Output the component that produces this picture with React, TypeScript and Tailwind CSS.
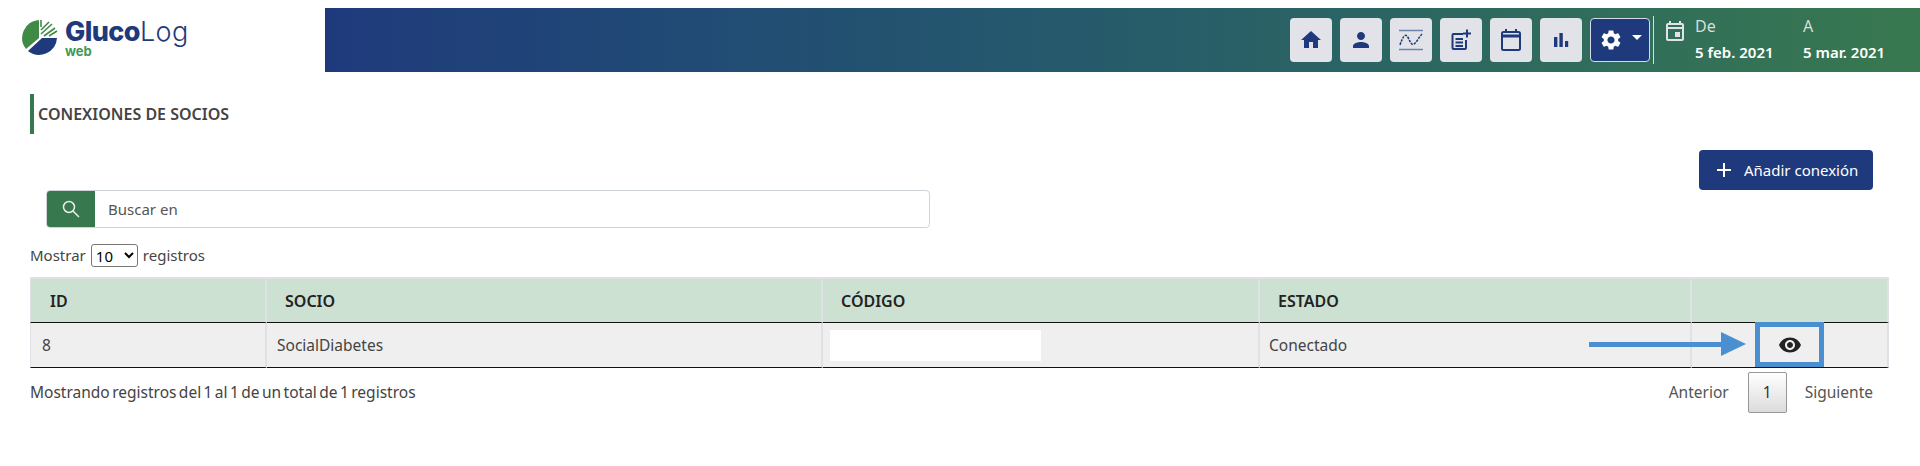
import React from "react";
import {
  MdAdd,
  MdHome,
  MdOutlineEvent,
  MdPerson,
  MdSettings,
  MdVisibility,
} from "react-icons/md";

function Logo() {
  return (
    <div className="flex h-[64px] w-[325px] items-start pl-[21px] pt-[8px]">
      <svg width="37" height="37" viewBox="0 0 37 37" className="mr-[7px] mt-[3px] shrink-0">
        <path d="M18 1 A18 18 0 0 0 5 30 L18 19 Z" fill="#3f8a45" />
        <path d="M7 32 A18 18 0 0 0 36 19 L21 19 Z" fill="#1f3a7c" />
        <g stroke="#3f8a45" strokeWidth="1.6">
          <path d="M20 1 L20 8" />
          <path d="M20 11 L28 3" />
          <path d="M20 15 L31 5" />
          <path d="M23 17 L34 9" />
          <path d="M28 17 L36 12" />
        </g>
      </svg>
      <div className="flex flex-col font-['Inter',sans-serif]">
        <div className="flex h-[30px] items-center text-[27px] leading-none tracking-[-0.6px] text-[#1f3a7c]">
          <span className="font-extrabold">Gluco</span>
          <span className="font-light tracking-[0.4px]">Log</span>
        </div>
        <div className="text-[13px] font-bold leading-[11px] text-[#3f9a55]">web</div>
      </div>
    </div>
  );
}

function IconButton({ children }: { children: React.ReactNode }) {
  return (
    <button className="flex h-[44px] w-[42px] items-center justify-center rounded-[4px] bg-[#e2e3e8] text-[#1f3a7c]">
      {children}
    </button>
  );
}

function Banner() {
  return (
    <div className="flex h-[64px] flex-1 items-center justify-end bg-gradient-to-r from-[#1f3a7c] to-[#38784f] pr-[34px]">
      <div className="flex items-center gap-[8px]">
        <IconButton>
          <MdHome size={24} />
        </IconButton>
        <IconButton>
          <MdPerson size={24} />
        </IconButton>
        <IconButton>
          <svg width="26" height="24" viewBox="0 0 26 24" fill="none" stroke="#1f3a7c">
            <path d="M1 2.5H25M1 21.5H25" stroke="#6f83b0" strokeWidth="1.5" />
            <path d="M2 17 C5 8 7 6 9 8 C12 12 13 18 16 16 C19 14 21 9 24 6" strokeWidth="1.5" strokeDasharray="2.5 1" />
          </svg>
        </IconButton>
        <IconButton>
          <svg width="22" height="22" viewBox="0 0 22 22" fill="none" stroke="#1f3a7c" strokeWidth="2">
            <path d="M13 5H3.5a1 1 0 0 0-1 1v13a1 1 0 0 0 1 1H15a1 1 0 0 0 1-1v-8" />
            <path d="M5.5 10H13M5.5 13.5H13M5.5 17H13" />
            <path d="M17 0.5V8.5M13 4.5H21" />
          </svg>
        </IconButton>
        <IconButton>
          <svg width="22" height="24" viewBox="0 0 22 24" fill="none" stroke="#1f3a7c" strokeWidth="2">
            <rect x="2" y="4" width="18" height="18" rx="1.5" />
            <path d="M2 8H20" strokeWidth="3" />
            <path d="M6 1V5M16 1V5" />
          </svg>
        </IconButton>
        <IconButton>
          <svg width="16" height="16" viewBox="0 0 16 16" fill="#1f3a7c">
            <rect x="1" y="5" width="3.4" height="10" />
            <rect x="6.4" y="1" width="3.4" height="14" />
            <rect x="12" y="9" width="3.2" height="6" />
          </svg>
        </IconButton>
        <button className="flex h-[44px] w-[60px] items-center justify-center gap-[9px] rounded-[4px] border border-[#d5dbe8] bg-[#1f3a7c] text-white">
          <MdSettings size={24} />
          <span className="mb-[6px] h-0 w-0 border-x-[5px] border-t-[5px] border-x-transparent border-t-white" />
        </button>
      </div>
      <div className="ml-[3px] h-[48px] w-px bg-[#d5dfdc]" />
      <MdOutlineEvent size={24} className="mb-[19px] ml-[9px] text-[#e2e3e8]" />
      <div className="ml-[8px] w-[108px] text-[15px]">
        <div className="mt-[-2px] text-[16px] leading-[24px] text-[#d8dfdc]">De</div>
        <div className="mt-[2px] font-semibold leading-[24px] text-white">5 feb. 2021</div>
      </div>
      <div className="w-[83px] text-[15px]">
        <div className="mt-[-2px] text-[16px] leading-[24px] text-[#d8dfdc]">A</div>
        <div className="mt-[2px] font-semibold leading-[24px] text-white">5 mar. 2021</div>
      </div>
    </div>
  );
}

function ConnectionsTable() {
  const th = "h-[46px] border-r-2 border-t-2 border-b border-r-[#dee2e6] border-t-[#dee2e6] border-b-[#111] text-left text-[16px] font-semibold text-[#222]";
  const td = "h-[45px] border-r-2 border-b border-r-[#dee2e6] border-b-[#111] text-[15.5px] text-[#444]";
  return (
    <div className="relative mt-[10px] w-[1859px]">
      <table className="w-full table-fixed border-separate border-spacing-0">
        <colgroup>
          <col className="w-[237px]" />
          <col className="w-[556px]" />
          <col className="w-[437px]" />
          <col className="w-[432px]" />
          <col className="w-[197px]" />
        </colgroup>
        <thead className="bg-[#cce1d2]">
          <tr>
            <th className={`${th} border-l pl-[19px] border-l-[#dee2e6]`}>ID</th>
            <th className={`${th} pl-[18px]`}>SOCIO</th>
            <th className={`${th} pl-[18px]`}>CÓDIGO</th>
            <th className={`${th} pl-[18px]`}>ESTADO</th>
            <th className={th} />
          </tr>
        </thead>
        <tbody className="bg-[#efefef]">
          <tr>
            <td className={`${td} border-l pl-[11px] pt-[2px] border-l-[#dee2e6]`}>8</td>
            <td className={`${td} pl-[10px] pt-[2px]`}>SocialDiabetes</td>
            <td className={`${td} pl-[7px]`}>
              <div className="h-[31px] w-[211px] bg-white" />
            </td>
            <td className={`${td} pl-[9px] pt-[2px]`}>Conectado</td>
            <td className={td}>
              <div className="ml-[63px] mt-[-1px] flex h-[45px] w-[69px] items-center justify-center border-[5px] border-[#4a90d0] text-[#222]">
                <MdVisibility size={24} />
              </div>
            </td>
          </tr>
        </tbody>
      </table>
      {/* annotation arrow over the row */}
      <div className="absolute left-[1559px] top-[55px] flex items-center">
        <div className="h-[5px] w-[132px] bg-[#4a90d0]" />
        <div className="h-0 w-0 border-y-[12px] border-l-[25px] border-y-transparent border-l-[#4a90d0]" />
      </div>
    </div>
  );
}

export default function App() {
  return (
    <div className="h-[466px] w-[1920px] overflow-hidden bg-white pt-[8px] font-['Noto_Sans',sans-serif] text-[15px] text-[#444]">
      <div className="flex">
        <Logo />
        <Banner />
      </div>

      <div className="pl-[30px]">
        <div className="mt-[22px] flex h-[40px] items-center border-l-4 border-[#38784f] pl-[4px] text-[16px] font-semibold text-[#444]">
          CONEXIONES DE SOCIOS
        </div>

        <div className="mt-[16px] flex justify-end pr-[47px]">
          <button className="flex h-[40px] w-[174px] items-center rounded-[4px] bg-[#1f3a7c] pl-[13px] text-[15px] text-white">
            <MdAdd size={24} className="mr-[8px]" />
            Añadir conexión
          </button>
        </div>

        <div className="ml-[16px] flex h-[38px] w-[884px] overflow-hidden rounded-[4px] border border-[#ced4da]">
          <div className="flex w-[48px] items-center justify-center bg-[#38784f] text-[#e8f0ea]">
            <svg width="18" height="18" viewBox="0 0 18 18" fill="none" stroke="currentColor" strokeWidth="1.5">
              <circle cx="7" cy="7" r="5.5" />
              <path d="M11 11L17 17" />
            </svg>
          </div>
          <div className="flex flex-1 items-center pl-[13px] text-[#555]">Buscar en</div>
        </div>

        <div className="mt-[16px] flex h-[23px] items-center gap-[5px]">
          Mostrar
          <select className="h-[23px] w-[47px] rounded-[3px] border border-[#777] bg-white text-[15px] text-black" defaultValue="10">
            <option>10</option>
          </select>
          registros
        </div>

        <ConnectionsTable />

        <div className="mt-[4px] flex h-[41px] w-[1859px] items-center justify-between text-[15.5px]">
          <div className="pt-[1px] [word-spacing:-1.6px]">Mostrando registros del 1 al 1 de un total de 1 registros</div>
          <div className="flex items-center pr-[16px] text-[#555]">
            Anterior
            <button className="ml-[19px] mr-[18px] h-[41px] w-[39px] rounded-[2px] border border-[#979797] bg-gradient-to-b from-white to-[#dcdcdc] text-[#333]">
              1
            </button>
            Siguiente
          </div>
        </div>
      </div>
    </div>
  );
}
